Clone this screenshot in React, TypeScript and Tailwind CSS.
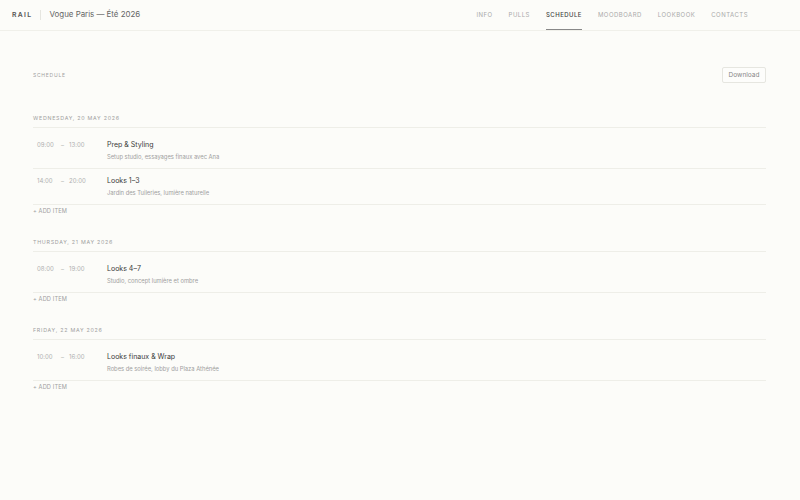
import React from "react";

const days = [
  {
    date: "Wednesday, 20 May 2026",
    items: [
      { start: "09:00", end: "13:00", title: "Prep & Styling", sub: "Setup studio, essayages finaux avec Ana" },
      { start: "14:00", end: "20:00", title: "Looks 1–3", sub: "Jardin des Tuileries, lumière naturelle" },
    ],
  },
  {
    date: "Thursday, 21 May 2026",
    items: [{ start: "08:00", end: "19:00", title: "Looks 4–7", sub: "Studio, concept lumière et ombre" }],
  },
  {
    date: "Friday, 22 May 2026",
    items: [{ start: "10:00", end: "16:00", title: "Looks finaux & Wrap", sub: "Robes de soirée, lobby du Plaza Athénée" }],
  },
];

const nav = ["Info", "Pulls", "Schedule", "Moodboard", "Lookbook", "Contacts"];

export default function App() {
  return (
    <div
      className="min-h-[500px] w-full bg-[#fcfcf9] text-[#333]"
      style={{ fontFamily: "Inter, 'Noto Sans', sans-serif" }}
    >
      <header className="flex h-[31px] items-stretch justify-between border-b border-[#f0f0ea] pl-[12px] pr-[52px]">
        <div className="flex items-center">
          <span className="text-[6.8px] font-semibold leading-none tracking-[0.2em] text-[#555]">RAIL</span>
          <span className="ml-[7px] mr-[9px] h-[10px] w-px bg-[#e6e6e0]" />
          <span className="text-[7.9px] leading-none text-[#666]">Vogue Paris — Été 2026</span>
        </div>
        <nav className="flex items-stretch gap-[16px]">
          {nav.map((n) => {
            const active = n === "Schedule";
            return (
              <div
                key={n}
                className={
                  "flex items-center border-b text-[6px] uppercase leading-none tracking-[0.08em] " +
                  (active ? "border-[#888] font-medium text-[#444]" : "border-transparent text-[#aaa]")
                }
              >
                <span className="pt-px">{n}</span>
              </div>
            );
          })}
        </nav>
      </header>

      <main className="pl-[33px] pr-[34px] pt-[36px]">
        <div className="flex h-[16px] items-center justify-between">
          <span className="text-[5px] uppercase leading-none tracking-[0.15em] text-[#a0a0a0]">Schedule</span>
          <button className="flex h-[16px] w-[44px] items-center justify-center rounded-[2px] border border-[#e6e6e0] bg-[#fdfdfb] text-[6.5px] leading-none text-[#888]">
            Download
          </button>
        </div>

        <div className="mt-[31px] flex flex-col gap-[22px]">
          {days.map((d) => (
            <section key={d.date}>
              <div className="border-b border-[#eeeee8] pb-[4px] text-[5.3px] uppercase leading-[9px] tracking-[0.14em] text-[#a0a0a0]">
                {d.date}
              </div>
              <div className="pt-[5px]">
                {d.items.map((it) => (
                  <div key={it.title} className="flex border-b border-[#eeeee8] pb-[6px] pt-[7px]">
                    <div className="flex h-[10px] w-[74px] items-center pl-[4px] text-[6px] leading-none text-[#b0b0b0]">
                      <span className="w-[17px]">{it.start}</span>
                      <span className="ml-[7px] w-[8px]">–</span>
                      <span>{it.end}</span>
                    </div>
                    <div className="flex flex-col gap-[2px]">
                      <span className="text-[7px] leading-[10px] text-[#3a3a3a]">{it.title}</span>
                      <span className="text-[5.8px] leading-[10px] text-[#a0a0a0]">{it.sub}</span>
                    </div>
                  </div>
                ))}
              </div>
              <div className="pt-[1px] text-[5.7px] uppercase leading-[10px] tracking-[0.02em] text-[#a0a0a0]">+ Add item</div>
            </section>
          ))}
        </div>
      </main>
    </div>
  );
}
